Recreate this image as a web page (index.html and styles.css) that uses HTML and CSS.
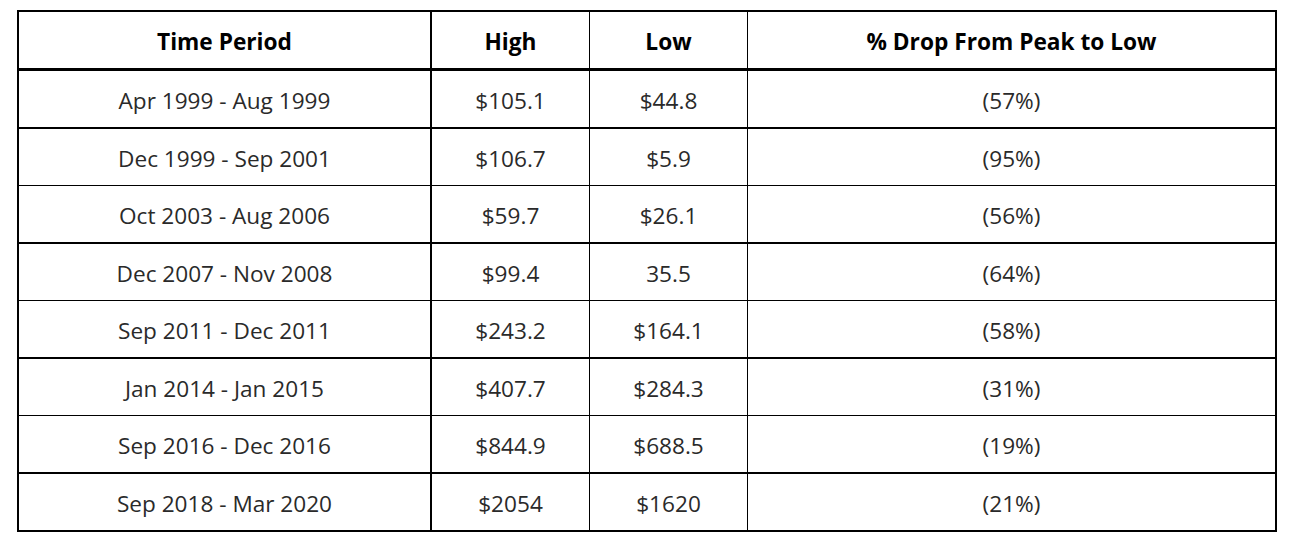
FILE: index.html
```html
<!DOCTYPE html>
<html>
<head>
<meta charset="utf-8">
<link rel="stylesheet" href="styles.css">
</head>
<body>
<table class="drops">
  <thead>
    <tr>
      <th class="c1">Time Period</th>
      <th class="c2">High</th>
      <th class="c3">Low</th>
      <th class="c4">% Drop From Peak to Low</th>
    </tr>
  </thead>
  <tbody>
    <tr class="thick"><td class="c1">Apr 1999 - Aug 1999</td><td class="c2">$105.1</td><td class="c3">$44.8</td><td class="c4">(57%)</td></tr>
    <tr class="thin"><td class="c1">Dec 1999 - Sep 2001</td><td class="c2">$106.7</td><td class="c3">$5.9</td><td class="c4">(95%)</td></tr>
    <tr class="thick"><td class="c1">Oct 2003 - Aug 2006</td><td class="c2">$59.7</td><td class="c3">$26.1</td><td class="c4">(56%)</td></tr>
    <tr class="thin"><td class="c1">Dec 2007 - Nov 2008</td><td class="c2">$99.4</td><td class="c3">35.5</td><td class="c4">(64%)</td></tr>
    <tr class="thick"><td class="c1">Sep 2011 - Dec 2011</td><td class="c2">$243.2</td><td class="c3">$164.1</td><td class="c4">(58%)</td></tr>
    <tr class="thin"><td class="c1">Jan 2014 - Jan 2015</td><td class="c2">$407.7</td><td class="c3">$284.3</td><td class="c4">(31%)</td></tr>
    <tr class="thick"><td class="c1">Sep 2016 - Dec 2016</td><td class="c2">$844.9</td><td class="c3">$688.5</td><td class="c4">(19%)</td></tr>
    <tr class="last"><td class="c1">Sep 2018 - Mar 2020</td><td class="c2">$2054</td><td class="c3">$1620</td><td class="c4">(21%)</td></tr>
  </tbody>
</table>
</body>
</html>
```
FILE: styles.css
```css
html, body {
  margin: 0;
  padding: 0;
  background: #ffffff;
}
body {
  padding: 10px 0 0 17px;
  font-family: "Open Sans", "Noto Sans", "Liberation Sans", sans-serif;
}
.drops {
  border-collapse: separate;
  border-spacing: 0;
  table-layout: fixed;
  width: 1260px;
  border-top: 2px solid #000;
  border-left: 2px solid #000;
  border-right: 2px solid #000;
}
.drops th, .drops td {
  padding: 0;
  text-align: center;
  vertical-align: middle;
  box-sizing: border-box;
}
.drops th {
  height: 59px;
  padding-top: 2px;
  font-size: 22.7px;
  font-weight: 700;
  color: #000;
  border-bottom: 3px solid #000;
}
.drops td {
  padding-top: 3px;
  font-size: 22.6px;
  font-weight: 400;
  color: #2a2a2a;
}
.drops .c1 { width: 413px; border-right: 2px solid #000; }
.drops .c2 { width: 158px; border-right: 1px solid #000; }
.drops .c3 { width: 158px; border-right: 1px solid #000; }
.drops .c4 { width: auto; }
.drops tr.thick td { height: 58px; border-bottom: 2px solid #000; }
.drops tr.thin td { height: 57px; border-bottom: 1px solid #000; }
.drops tr.last td { height: 58px; border-bottom: 2px solid #000; }
```
